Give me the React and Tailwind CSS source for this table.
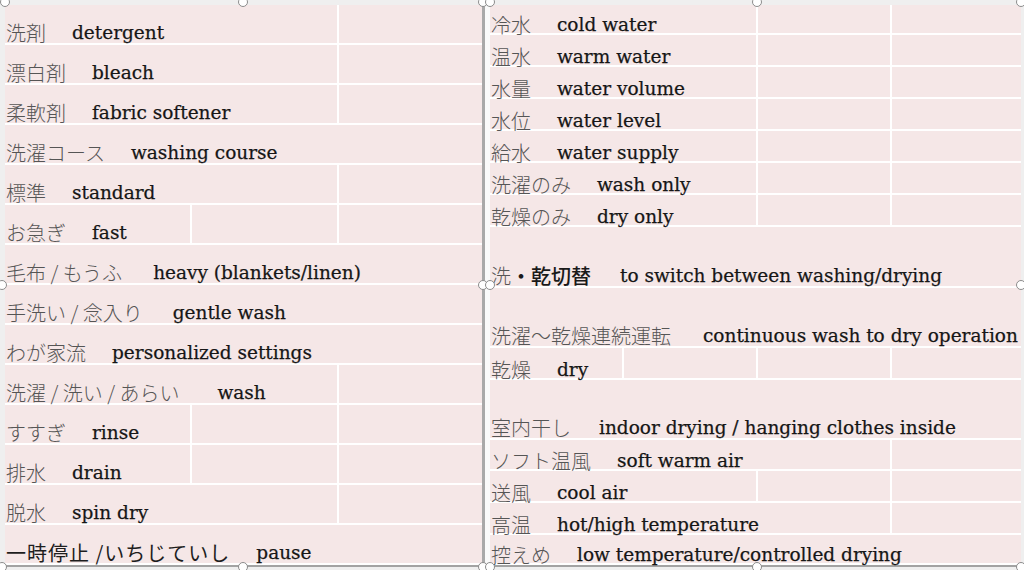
import React from "react";

const jp = "font-['Noto_Sans_CJK_JP','Noto_Sans',sans-serif]";
const en = "font-['DejaVu_Serif','Liberation_Serif',serif]";

// cell layouts for rows (white grid lines between cells)
const LEFT_CELLS = {
  N: [],
  A: ["flex-1 border-l-2 border-white"],
  B: ["w-[147px] border-l-2 border-white", "flex-1 border-l-2 border-white"],
};
const LEFT_FIRST = { N: "flex-1", A: "w-[332px]", B: "w-[185px]" };

const RIGHT_CELLS = {
  N: [],
  R1: ["flex-1 border-l-2 border-white"],
  R2: ["w-[134px] border-l-2 border-white", "flex-1 border-l-2 border-white"],
  R3: [
    "w-[134px] border-l-2 border-white",
    "w-[134px] border-l-2 border-white",
    "flex-1 border-l-2 border-white",
  ],
};
const RIGHT_FIRST = { N: "flex-1", R1: "w-[400px]", R2: "w-[266px]", R3: "w-[132px]" };

const leftRows = [
  { ja: "洗剤", en: "detergent", t: "A" },
  { ja: "漂白剤", en: "bleach", t: "A" },
  { ja: "柔軟剤", en: "fabric softener", t: "A" },
  { ja: "洗濯コース", en: "washing course", t: "N" },
  { ja: "標準", en: "standard", t: "A" },
  { ja: "お急ぎ", en: "fast", t: "B" },
  { ja: "毛布 / もうふ", en: "heavy (blankets/linen)", t: "N", gap: "ml-[31px]" },
  { ja: "手洗い / 念入り", en: "gentle wash", t: "N", gap: "ml-[30px]" },
  { ja: "わが家流", en: "personalized settings", t: "N" },
  { ja: "洗濯 / 洗い / あらい", en: "wash", t: "A", gap: "ml-[38px]" },
  { ja: "すすぎ", en: "rinse", t: "B" },
  { ja: "排水", en: "drain", t: "B" },
  { ja: "脱水", en: "spin dry", t: "A" },
  { ja: "一時停止 /いちじていし", en: "pause", t: "N", dark: true },
];

const rightRows = [
  { ja: "冷水", en: "cold water", t: "R2", h: "h-[30px]", lh: "leading-[16px]" },
  { ja: "温水", en: "warm water", t: "R2", h: "h-[32px]", lh: "leading-[16px]" },
  { ja: "水量", en: "water volume", t: "R2", h: "h-[32px]", lh: "leading-[16px]" },
  { ja: "水位", en: "water level", t: "R2", h: "h-[32px]", lh: "leading-[16px]" },
  { ja: "給水", en: "water supply", t: "R2", h: "h-[32px]", lh: "leading-[16px]" },
  { ja: "洗濯のみ", en: "wash only", t: "R2", h: "h-[32px]", lh: "leading-[16px]" },
  { ja: "乾燥のみ", en: "dry only", t: "R2", h: "h-[32px]", lh: "leading-[16px]" },
  { ja: "switch", en: "to switch between washing/drying", t: "N", h: "h-[61px]", gap: "ml-[29px]" },
  { ja: "洗濯〜乾燥連続運転", en: "continuous wash to dry operation", t: "N", h: "h-[60px]", gap: "ml-[32px]" },
  { ja: "乾燥", en: "dry", t: "R3", h: "h-[32px]", lh: "leading-[16px]" },
  { ja: "室内干し", en: "indoor drying / hanging clothes inside", t: "N", h: "h-[60px]", gap: "ml-[28px]" },
  { ja: "ソフト温風", en: "soft warm air", t: "R1", h: "h-[31px]", lh: "leading-[16px]" },
  { ja: "送風", en: "cool air", t: "R2", h: "h-[32px]", lh: "leading-[16px]" },
  { ja: "高温", en: "hot/high temperature", t: "R1", h: "h-[32px]", lh: "leading-[16px]" },
  { ja: "控えめ", en: "low temperature/controlled drying", t: "N", h: "h-[30px]", lh: "leading-[16px]" },
];

const Label = ({ row }) => (
  <div className={`flex items-end whitespace-nowrap pl-[1px] ${row.lh || "leading-[20px]"}`}>
    {row.ja === "switch" ? (
      <span className={`${jp} text-[20px] font-light text-[#555]`}>
        洗<span className="font-medium text-[#1a1a1a]">・乾切替</span>
      </span>
    ) : row.dark ? (
      <span className={`${jp} text-[20px] tracking-[1px] text-[#1e1e1e]`}>{row.ja}</span>
    ) : (
      <span className={`${jp} text-[20px] font-light text-[#555]`}>{row.ja}</span>
    )}
    <span
      className={`${en} ${row.gap || "ml-[26px]"} text-[18.5px] text-[#161616] [-webkit-text-stroke:0.25px_#161616]`}
    >
      {row.en}
    </span>
  </div>
);

const Handle = ({ className }) => (
  <div
    className={`absolute h-[10px] w-[10px] rounded-full border border-[#8c8c8c] bg-white ${className}`}
  />
);

export default function App() {
  return (
    <div className="relative h-[570px] w-[1024px] overflow-hidden bg-[#efefef] pl-[5px] pt-[5px]">
      <div className="flex w-[1016px] border-b-2 border-[#a3a3a3]">
        {/* left sheet */}
        <div className="w-[477px] bg-[#f5e7e7]">
          {leftRows.map((r, i) => (
            <div key={i} className="flex h-[40px] border-b-2 border-white">
              <div className={`${LEFT_FIRST[r.t]} flex items-end`}>
                <Label row={r} />
              </div>
              {LEFT_CELLS[r.t].map((c, j) => (
                <div key={j} className={c} />
              ))}
            </div>
          ))}
        </div>

        {/* divider */}
        <div className="w-[3px] bg-[#a9a9a9]" />
        <div className="w-[5px] bg-[#fafafa]" />

        {/* right sheet */}
        <div className="w-[531px] bg-[#f5e7e7]">
          {rightRows.map((r, i) => (
            <div key={i} className={`flex ${r.h} border-b-2 border-white`}>
              <div className={`${RIGHT_FIRST[r.t]} flex items-end`}>
                <Label row={r} />
              </div>
              {RIGHT_CELLS[r.t].map((c, j) => (
                <div key={j} className={c} />
              ))}
            </div>
          ))}
        </div>
      </div>

      {/* selection handles */}
      <Handle className="left-[0px] top-[-3px]" />
      <Handle className="left-[238px] top-[-3px]" />
      <Handle className="left-[478px] top-[-3px]" />
      <Handle className="left-[485px] top-[-3px]" />
      <Handle className="left-[752px] top-[-3px]" />
      <Handle className="left-[1016px] top-[-3px]" />
      <Handle className="left-[-3px] top-[280px]" />
      <Handle className="left-[478px] top-[280px]" />
      <Handle className="left-[485px] top-[280px]" />
      <Handle className="left-[1016px] top-[280px]" />
      <Handle className="left-[-3px] top-[562px]" />
      <Handle className="left-[238px] top-[562px]" />
      <Handle className="left-[478px] top-[562px]" />
      <Handle className="left-[485px] top-[562px]" />
      <Handle className="left-[752px] top-[562px]" />
      <Handle className="left-[1016px] top-[562px]" />
    </div>
  );
}
